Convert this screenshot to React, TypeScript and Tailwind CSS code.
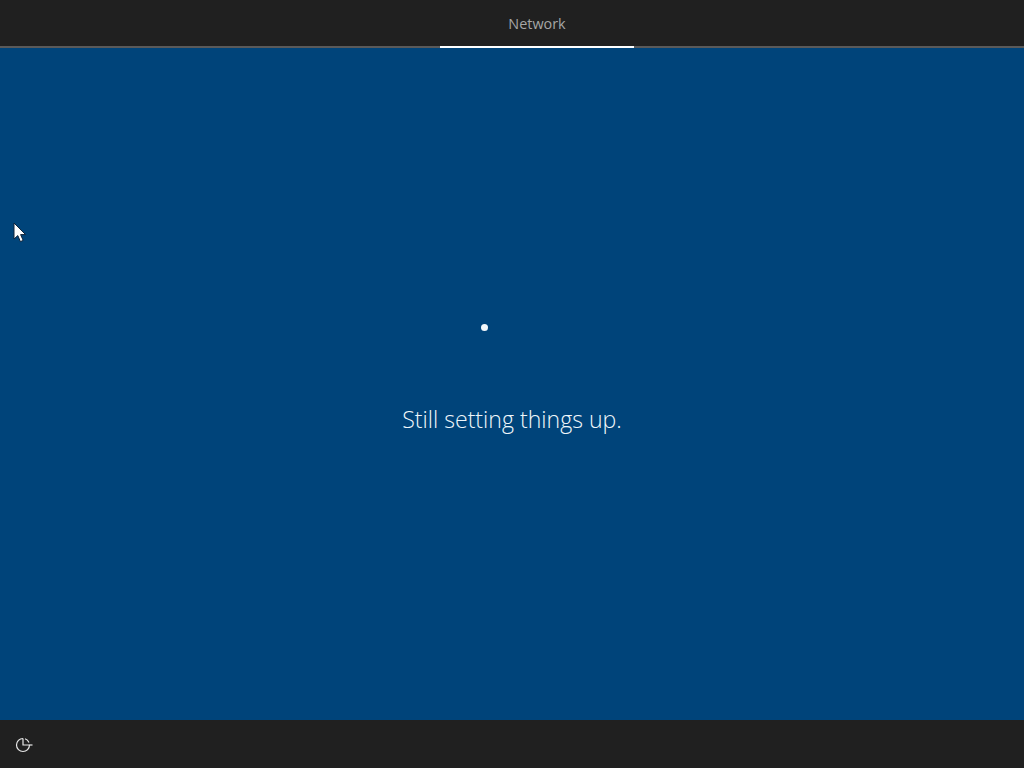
import React from 'react';

const App: React.FC = () => {
  return (
    <div className="relative flex h-screen w-full flex-col overflow-hidden bg-[#00447a] font-['Open_Sans',sans-serif]">
      {/* Top step bar */}
      <div className="flex h-[48px] shrink-0 justify-center border-b-2 border-[#5a5a5a] bg-[#202020] pl-[50px]">
        <div className="-mb-[2px] flex w-[194px] items-center justify-center border-b-2 border-white pt-[2px]">
          <span className="text-[14.4px] text-[#a6a6a6]">Network</span>
        </div>
      </div>

      {/* Spinner and message */}
      <div className="flex flex-1 flex-col items-center pt-[247px]">
        <div className="relative h-[64px] w-[64px]">
          <div className="absolute left-[0.5px] top-[28.5px] h-[7px] w-[7px] rounded-full bg-[#f2f8fc]" />
        </div>
        <p className="mt-[45px] text-[23.1px] font-light leading-[30px] text-[#f0f7fb]">Still setting things up.</p>
      </div>

      {/* Bottom bar */}
      <div className="flex h-[48px] shrink-0 items-center bg-[#202020] pl-[15px] pt-[2px]">
        <svg width="18" height="18" viewBox="0 0 18 18" fill="none" stroke="#e8e8e8" strokeWidth="1.2">
          <path d="M8 2.5A6.5 6.5 0 1 0 14.5 9H8V2.5" />
          <path d="M14.5 9H17.5" />
          <path d="M10 2.8A6.5 6.5 0 0 1 14 6.4" />
        </svg>
      </div>

      {/* Mouse pointer */}
      <svg className="absolute left-[13px] top-[222px]" width="14" height="21" viewBox="0 0 14 21">
        <path d="M1 1V17L4.8 13.6L7.4 19.6L10.2 18.4L7.6 12.6H12.6Z" fill="#fff" stroke="#10243a" strokeWidth="1" />
      </svg>
    </div>
  );
};

export default App;
